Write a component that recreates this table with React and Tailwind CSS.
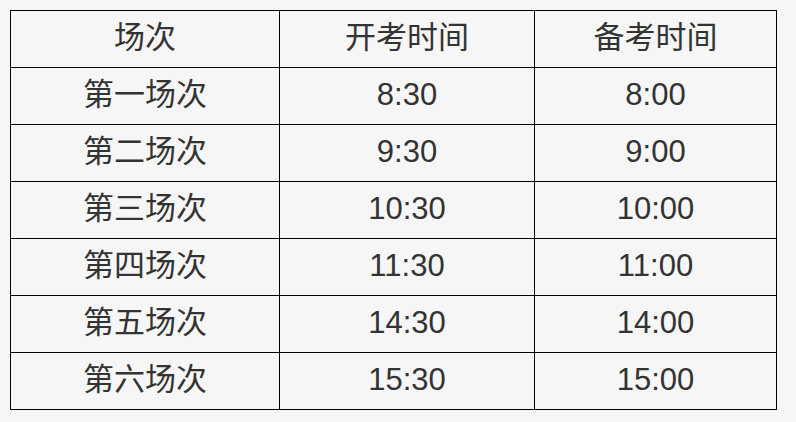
const ROWS = [
  ["第一场次", "8:30", "8:00"],
  ["第二场次", "9:30", "9:00"],
  ["第三场次", "10:30", "10:00"],
  ["第四场次", "11:30", "11:00"],
  ["第五场次", "14:30", "14:00"],
  ["第六场次", "15:30", "15:00"],
];

const HEAD = ["场次", "开考时间", "备考时间"];

export default function App() {
  return (
    <div
      className="w-[796px] h-[422px] bg-[#f6f6f6] pt-[10px] pl-[10px] text-[#333] overflow-hidden"
      style={{ fontFamily: '"Liberation Sans", "Noto Sans CJK SC", sans-serif' }}
    >
      <table className="table-fixed border-collapse w-[766px] text-[31px] leading-none">
        <colgroup>
          <col className="w-[269px]" />
          <col className="w-[255px]" />
          <col className="w-[242px]" />
        </colgroup>
        <thead>
          <tr>
            {HEAD.map((h) => (
              <th key={h} className="h-[57px] border border-black font-normal text-center p-0 pb-[4px]">
                {h}
              </th>
            ))}
          </tr>
        </thead>
        <tbody>
          {ROWS.map((row) => (
            <tr key={row[0]}>
              {row.map((cell, i) => (
                <td key={i} className="h-[57px] border border-black text-center p-0 pb-[4px]">
                  {cell}
                </td>
              ))}
            </tr>
          ))}
        </tbody>
      </table>
    </div>
  );
}
